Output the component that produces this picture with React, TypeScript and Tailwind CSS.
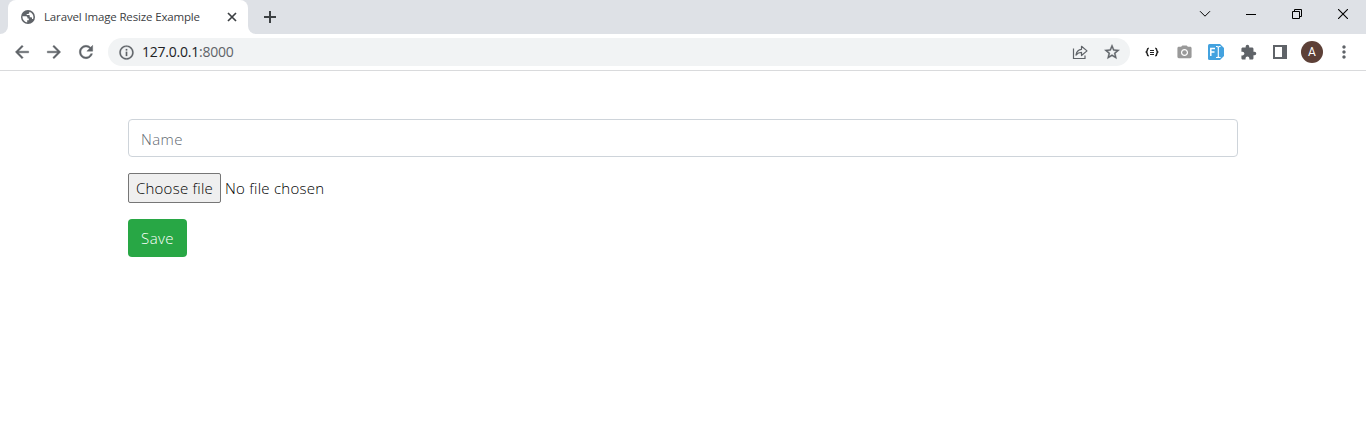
import React from 'react';
import { MdCameraAlt, MdExtension, MdMoreVert } from 'react-icons/md';

function Cell({ children }: { children: React.ReactNode }) {
  return <div className="flex h-8 w-8 shrink-0 items-center justify-center">{children}</div>;
}

function WindowButton({ children }: { children: React.ReactNode }) {
  return <div className="flex h-7 w-[46px] items-center justify-center text-black">{children}</div>;
}

function Glyph({ size, weight, d }: { size: number; weight: number; d: string }) {
  return (
    <svg width={size} height={size} viewBox="0 0 24 24" fill="currentColor" stroke="currentColor" strokeWidth={weight} className="shrink-0">
      <path d={d} />
    </svg>
  );
}

const BACK = 'M20 11H7.830l5.590-5.590L12 4l-8 8 8 8 1.410-1.410L7.830 13H20v-2z';
const FORWARD = 'M12 4l-1.410 1.410L16.170 11H4v2h12.170l-5.580 5.590L12 20l8-8z';
const RELOAD = 'M17.650 6.350C16.200 4.900 14.210 4 12 4c-4.420 0-7.990 3.580-7.990 8s3.570 8 7.990 8c3.730 0 6.840-2.550 7.730-6h-2.080c-.82 2.330-3.040 4-5.650 4-3.310 0-6-2.690-6-6s2.690-6 6-6c1.660 0 3.140.69 4.220 1.780L13 11h7V4l-2.350 2.350z';
const INFO = 'M11 7h2v2h-2zm0 4h2v6h-2zm1-9C6.480 2 2 6.480 2 12s4.480 10 10 10 10-4.480 10-10S17.520 2 12 2zm0 18c-4.410 0-8-3.590-8-8s3.590-8 8-8 8 3.590 8 8-3.590 8-8 8z';
const STAR = 'M22 9.240l-7.190-.62L12 2 9.190 8.630 2 9.240l5.460 4.730L5.820 21 12 17.270 18.180 21l-1.630-7.030L22 9.240zM12 15.400l-3.760 2.270 1-4.280-3.320-2.880 4.380-.38L12 6.100l1.710 4.040 4.380.38-3.320 2.880 1 4.280L12 15.400z';

function Globe() {
  return (
    <svg width="14" height="14" viewBox="0 0 14 14" className="shrink-0">
      <circle cx="7" cy="7" r="7" fill="#5f6368" />
      <path d="M8.300 1.700v1c0 .7-.5 1.200-1.200 1.200H5.700v1.200h2.100c.6 0 1 .5 1 1v1.200h1.200c.6 0 1 .4 1 1v.6h1.100A5.600 5.600 0 0 0 8.300 1.700zM1.500 6.300h3.300c1 0 1.700.7 1.700 1.500v.8h1.300v1.600H6.200v2.200A5.600 5.600 0 0 1 1.500 6.300z" fill="#fff" />
    </svg>
  );
}

function TabStrip() {
  return (
    <div className="flex h-[34px] bg-[#dee1e6]">
      <div className="flex w-2 items-end bg-white">
        <div className="h-full w-2 rounded-br-lg bg-[#dee1e6]" />
      </div>
      <div className="flex w-60 bg-[#dee1e6]">
        <div className="flex w-full items-center rounded-t-lg bg-white pl-[13px]">
          <Globe />
          <span className="ml-[9px] w-[180px] whitespace-nowrap font-['Open_Sans',sans-serif] text-[11.5px] tracking-[-0.15px] text-[#3c4043]">Laravel Image Resize Example</span>
          <svg width="14" height="14" viewBox="0 0 14 14" className="ml-px shrink-0" stroke="#3c4043" strokeWidth="1.700"><path d="M3 3l8 8M11 3l-8 8" /></svg>
        </div>
      </div>
      <div className="flex w-2 bg-white">
        <div className="h-full w-2 rounded-bl-lg bg-[#dee1e6]" />
      </div>
      <div className="flex flex-1 items-center pl-[5px]">
        <svg width="18" height="18" viewBox="0 0 18 18" stroke="#3c4043" strokeWidth="2"><path d="M9 3v12M3 9h12" /></svg>
      </div>
      <div className="flex">
        <WindowButton>
          <svg width="12" height="8" viewBox="0 0 12 8" fill="none" stroke="currentColor"><path d="M1 1.200l5 5 5-5" /></svg>
        </WindowButton>
        <WindowButton>
          <div className="h-px w-2.5 bg-black" />
        </WindowButton>
        <WindowButton>
          <svg width="10" height="10" viewBox="0 0 10 10" fill="none" stroke="currentColor"><path d="M.5 2.500h7v7h-7zM2.500 2.500v-2h7v7h-2" /></svg>
        </WindowButton>
        <WindowButton>
          <svg width="10" height="10" viewBox="0 0 10 10" fill="none" stroke="currentColor"><path d="M0 0l10 10M10 0L0 10" strokeWidth="1.100" /></svg>
        </WindowButton>
      </div>
    </div>
  );
}

function Toolbar() {
  return (
    <div className="flex h-[37px] items-center border-b border-[#d9dadc] bg-white px-1.5 text-[#5f6368]">
      <Cell><Glyph size={20} weight={0.5} d={BACK} /></Cell>
      <Cell><Glyph size={20} weight={0.5} d={FORWARD} /></Cell>
      <Cell><Glyph size={20} weight={0.5} d={RELOAD} /></Cell>
      <div className="mx-1.5 flex h-7 flex-1 items-center rounded-full bg-[#f1f3f4] px-0.5">
        <Cell><Glyph size={17} weight={0.3} d={INFO} /></Cell>
        <div className="flex-1 whitespace-nowrap pb-px font-['Open_Sans',sans-serif] text-[14px] tracking-[-0.23px] text-[#5f6368]"><span className="text-[#202124]">127.0.0.1</span>:8000</div>
        <Cell>
          <svg width="16" height="16" viewBox="0 0 16 16" fill="none" stroke="currentColor" strokeWidth="1.200"><path d="M1.500 4.500v10h11.500v-3" /><path d="M4 11c.6-3.800 2.400-5.500 5.500-5.700V2.300l5.500 4.600-5.500 4.600V8.400C7 8.400 5.400 9.300 4 11z" strokeLinejoin="round" /></svg>
        </Cell>
        <Cell><Glyph size={18} weight={0.5} d={STAR} /></Cell>
      </div>
      <Cell>
        <svg width="14" height="10" viewBox="0 0 14 10" fill="none" stroke="#222"><path strokeWidth="1.500" d="M3.800 1.200c-1.300 0-1.500.4-1.500 1.800 0 1.300-.3 1.700-1.500 2 1.200.3 1.500.7 1.500 2 0 1.400.2 1.800 1.500 1.800M10.200 1.200c1.300 0 1.500.4 1.500 1.800 0 1.300.3 1.700 1.500 2-1.200.3-1.500.7-1.500 2 0 1.400-.2 1.800-1.500 1.800" /><path d="M5 3.500h4M5 5.500h4M5 7.500h4" /></svg>
      </Cell>
      <Cell><MdCameraAlt size={17} className="text-[#999]" /></Cell>
      <Cell>
        <svg width="16" height="16" viewBox="0 0 16 16"><path d="M1.500 0H12l4 4v8l-4 4H1.500Q0 16 0 14.500v-13Q0 0 1.500 0z" fill="#43a2df" /><path d="M2.800 12V4.500H7M2.800 8H6.500" fill="none" stroke="#fff" strokeWidth="1.500" /><path d="M8 2.500h1q1.300 0 1.300 1 0-1 1.300-1h1M10.300 3.500v9M8 13.500h1q1.300 0 1.300-1 0 1 1.300 1h1" fill="none" stroke="#fff" strokeWidth="1.100" /></svg>
      </Cell>
      <Cell><MdExtension size={17} /></Cell>
      <Cell>
        <svg width="14" height="14" viewBox="0 0 14 14"><path d="M0 0h14v14H0zM2 2v10h7V2z" fill="currentColor" fillRule="evenodd" /></svg>
      </Cell>
      <Cell>
        <div className="flex h-[22px] w-[22px] items-center justify-center rounded-full bg-[#5d4037] font-['Roboto',sans-serif] text-[12px] text-white">A</div>
      </Cell>
      <Cell><MdMoreVert size={20} /></Cell>
    </div>
  );
}

export default function App() {
  return (
    <div className="h-[434px] w-[1366px] overflow-hidden bg-white">
      <TabStrip />
      <Toolbar />
      <div className="flex flex-col items-start gap-4 px-32 pt-12 font-['Open_Sans',sans-serif] text-[15px] font-light">
        <div className="flex h-[38px] w-full items-center rounded border border-[#ced4da] px-3 pt-0.5 text-[#5f6870]">
          <span className="tracking-[0.4px]">Name</span>
        </div>
        <div className="flex h-[30px] items-center gap-1">
          <div className="flex h-[30px] w-[93px] items-center justify-center whitespace-nowrap rounded-xs border border-[#767676] bg-[#efefef] tracking-[0.25px] text-black">Choose file</div>
          <span className="whitespace-nowrap tracking-[0.25px] text-black">No file chosen</span>
        </div>
        <div className="flex h-[38px] w-[59px] items-center justify-center rounded bg-[#28a745] pt-px tracking-[0.4px] text-white">Save</div>
      </div>
    </div>
  );
}
